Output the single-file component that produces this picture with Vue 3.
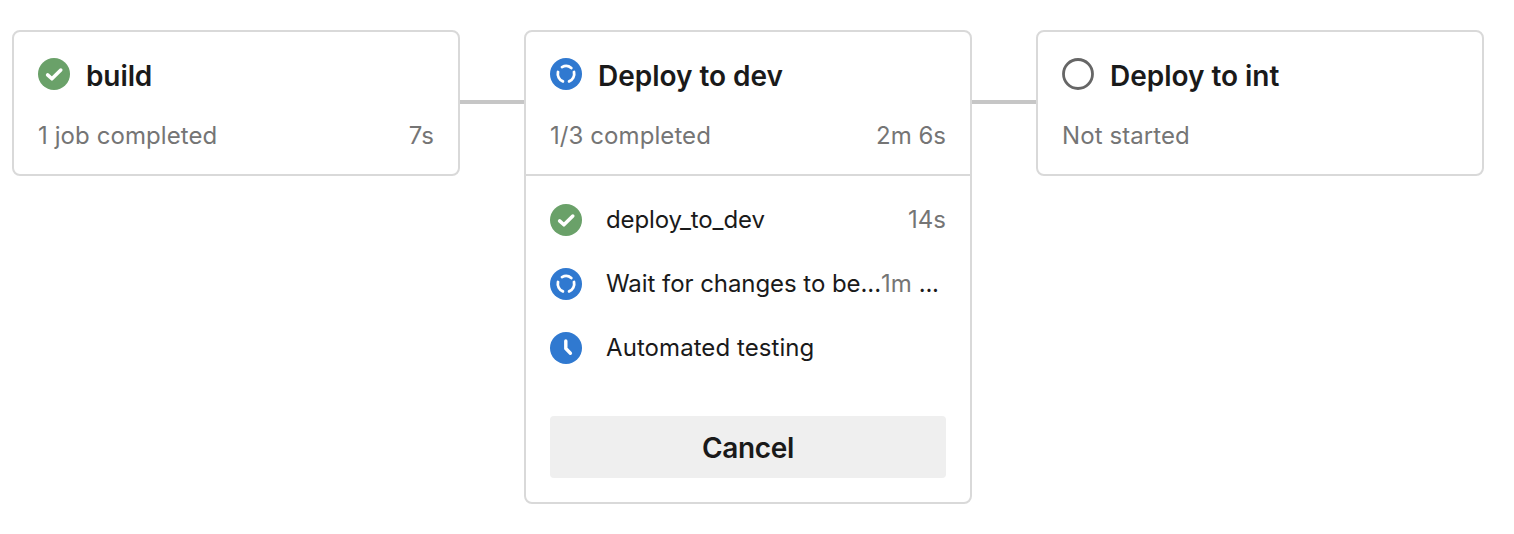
<script setup>
import { h } from 'vue'

const stages = [
  { name: 'build', status: 'success', note: '1 job completed', time: '7s', k: 'build' },
  {
    name: 'Deploy to dev', status: 'running', note: '1/3 completed', time: '2m 6s', k: 'dev',
    jobs: [
      { name: 'deploy_to_dev', status: 'success', time: '14s', k: 'job-a' },
      { name: 'Wait for changes to be...', status: 'running', time: '1m', more: '...', k: 'job-b' },
      { name: 'Automated testing', status: 'waiting', k: 'job-c' },
    ],
  },
  { name: 'Deploy to int', status: 'pending', note: 'Not started', k: 'int' },
]

const glyphs = {
  success: { fill: '#6aa169', d: 'M9.6 16.9L13.9 20.8L22.8 12', w: 3.5 },
  running: { fill: '#3079d0', d: 'M12 9.1A8.1 8.1 0 0 1 21.3 10M8 14A8.1 8.1 0 0 0 12.9 23.4M24 14A8.1 8.1 0 0 1 19.1 23.4', w: 2.8 },
  waiting: { fill: '#3079d0', d: 'M15.8 9V16.5L20.4 21.2', w: 3.4 },
  pending: { fill: 'none', d: '', w: 0 },
}

const StatusIcon = (props) => {
  const g = glyphs[props.status]
  return h('svg', { width: 32, height: 32, viewBox: '0 0 32 32' }, [
    props.status === 'pending'
      ? h('circle', { cx: 16, cy: 16, r: 14.5, fill: 'none', stroke: '#666', 'stroke-width': 2.8 })
      : h('circle', { cx: 16, cy: 16, r: 16, fill: g.fill }),
    h('path', { d: g.d, fill: 'none', stroke: '#fff', 'stroke-width': g.w, 'stroke-linecap': 'round', 'stroke-linejoin': 'round' }),
  ])
}
StatusIcon.props = ['status']
</script>

<template>
  <main class="pipeline">
    <template v-for="(s, i) in stages" :key="s.name">
      <div v-if="i" class="link"></div>
      <section class="card">
        <header class="head">
          <div class="title-row">
            <StatusIcon class="icon" :status="s.status" />
            <h2 :class="['title', s.k]">{{ s.name }}</h2>
          </div>
          <div class="meta">
            <span :class="['note', s.k]">{{ s.note }}</span>
            <span :class="['time', s.k]">{{ s.time }}</span>
          </div>
        </header>
        <div v-if="s.jobs" class="body">
          <div v-for="j in s.jobs" :key="j.name" class="job">
            <StatusIcon class="icon" :status="j.status" />
            <span :class="['job-name', j.k]">{{ j.name }}</span>
            <span v-if="j.time" :class="['time', j.k]">{{ j.time }}<span v-if="j.more" class="more">{{ j.more }}</span></span>
          </div>
          <button class="cancel" type="button">Cancel</button>
        </div>
      </section>
    </template>
  </main>
</template>

<style>
body {
  background: #fff;
}
</style>

<style scoped>
.pipeline {
  display: flex;
  align-items: flex-start;
  box-sizing: border-box;
  height: 534px;
  padding: 30px 0 0 12px;
  font-family: Inter, "Liberation Sans", sans-serif;
  font-size: 24px;
  color: #1a1a1a;
  overflow: hidden;
}
.card {
  box-sizing: border-box;
  flex: none;
  width: 448px;
  border: 2px solid #d9d9d9;
  border-radius: 8px;
}
.link {
  flex: none;
  width: 64px;
  height: 4px;
  margin-top: 70px;
  background: #c6c6c6;
}
.head {
  box-sizing: border-box;
  height: 142px;
  padding: 26px 24px 0;
}
.title-row {
  display: flex;
  gap: 16px;
  height: 32px;
}
.icon {
  display: block;
  flex: none;
}
.title {
  margin: 2px 0 0;
  font-size: 28px;
  line-height: 32px;
  font-weight: 600;
  letter-spacing: -0.03px;
  white-space: nowrap;
}
.title.build {
  letter-spacing: -0.1px;
}
.meta {
  display: flex;
  justify-content: space-between;
  margin-top: 30px;
  line-height: 32px;
  color: #757575;
}
.note,
.time,
.job-name {
  white-space: nowrap;
}
.note {
  letter-spacing: 0.08px;
}
.time {
  color: #757575;
}
.body {
  border-top: 2px solid #d9d9d9;
  padding: 28px 24px 24px;
}
.job {
  display: flex;
  height: 32px;
  margin-bottom: 32px;
  line-height: 32px;
}
.job-name {
  margin-left: 24px;
}
.job-name.job-a {
  letter-spacing: -0.12px;
}
.job-name.job-b {
  letter-spacing: -0.06px;
}
.job-name.job-c {
  letter-spacing: 0.07px;
}
.job .time {
  margin-left: auto;
}
.job .time.job-b {
  margin-left: 0;
  flex: 1;
}
.more {
  margin-left: 7px;
  letter-spacing: -0.3px;
  color: #1a1a1a;
}
.cancel {
  display: block;
  width: 100%;
  height: 62px;
  margin-top: 52px;
  padding: 2px 0 0;
  border: 0;
  border-radius: 4px;
  background: #efefef;
  font: 600 28px/32px Inter, "Liberation Sans", sans-serif;
  letter-spacing: -0.35px;
  color: #1a1a1a;
}
</style>
